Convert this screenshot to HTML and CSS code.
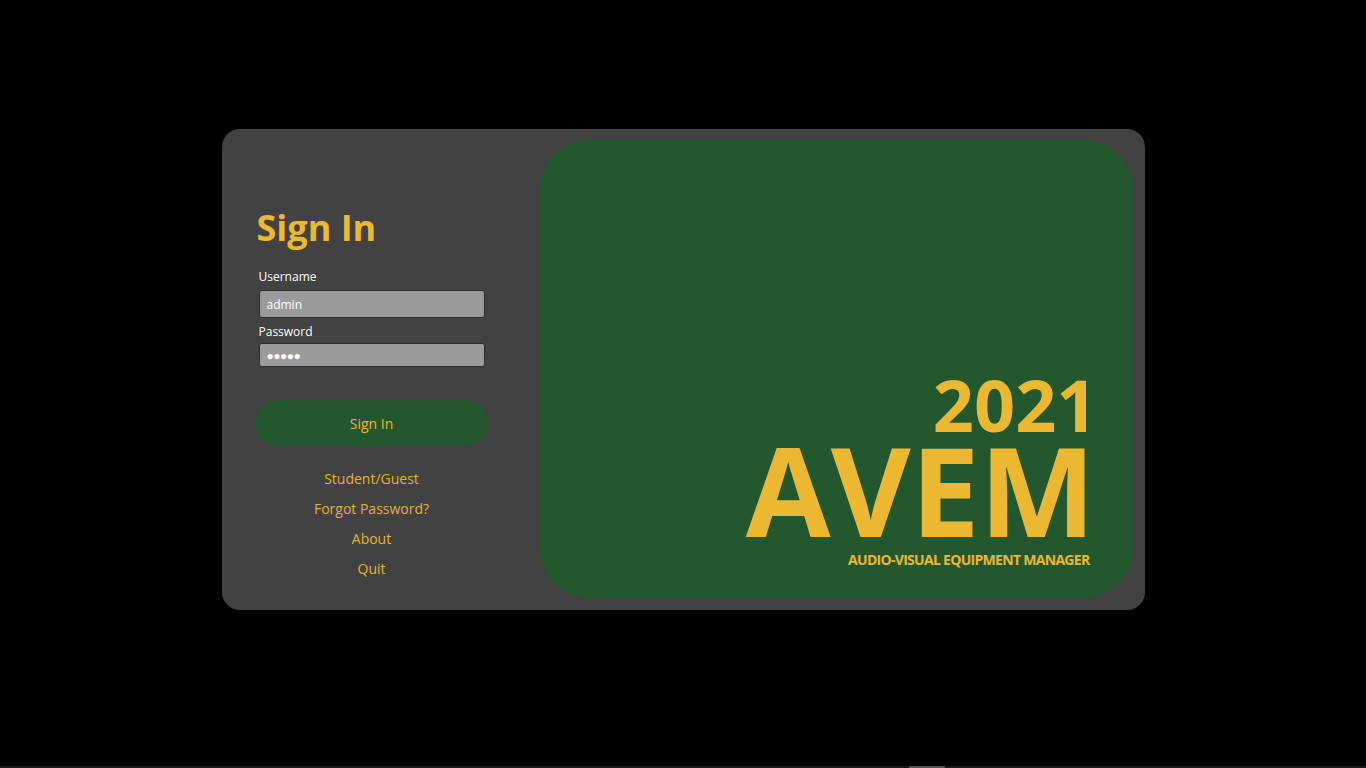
FILE: index.html
```html
<!DOCTYPE html>
<html lang="en">
<head>
<meta charset="utf-8">
<title>AVEM - Sign In</title>
<link rel="stylesheet" href="styles.css">
</head>
<body>
<div class="card">
  <div class="login">
    <h1 class="title">Sign In</h1>
    <label class="label label-user">Username</label>
    <div class="input input-user">admin</div>
    <label class="label label-pass">Password</label>
    <div class="input input-pass">●●●●●</div>
    <button class="btn">Sign In</button>
    <nav class="links">
      <a class="link">Student/Guest</a>
      <a class="link">Forgot Password?</a>
      <a class="link">About</a>
      <a class="link">Quit</a>
    </nav>
  </div>
  <div class="brand">
    <div class="year">2021</div>
    <div class="name">AVEM</div>
    <div class="sub">AUDIO-VISUAL EQUIPMENT MANAGER</div>
  </div>
</div>
<div class="bottombar"><span class="thumb"></span></div>
</body>
</html>
```
FILE: styles.css
```css
* { box-sizing: border-box; }
html, body { margin: 0; padding: 0; }
body {
  background: #000;
  height: 768px;
  overflow: hidden;
  font-family: "Open Sans", "Noto Sans", sans-serif;
}
.card {
  width: 923px;
  height: 481px;
  margin: 129px auto 0;
  background: #424242;
  border-radius: 18px;
  display: flex;
}
.login {
  width: 318px;
  padding: 79px 52px 0 34px;
  display: flex;
  flex-direction: column;
}
.title {
  margin: 0 0 0 1px;
  font-size: 36px;
  line-height: 40px;
  font-weight: 700;
  color: #ecb731;
}
.label {
  display: block;
  margin-left: 3px;
  font-size: 12px;
  line-height: 16px;
  color: #ffffff;
}
.label-user { margin-top: 21px; }
.label-pass { margin-top: 6px; }
.input {
  margin: 0 3px;
  background: #9b9b9b;
  border: 1px solid #2e2e2e;
  border-radius: 3px;
  color: #ffffff;
  font-size: 12px;
  padding-left: 7px;
  display: flex;
  align-items: center;
}
.input-user { margin-top: 5px; height: 28px; }
.input-pass { margin-top: 3px; height: 24px; font-size: 12px; letter-spacing: -0.5px; }
.btn {
  margin-top: 33px;
  height: 46px;
  width: 232px;
  border: none;
  border-radius: 23px;
  background: #23572e;
  color: #ecb731;
  font-family: inherit;
  font-size: 14px;
  padding: 0;
}
.links {
  margin-top: 18px;
  display: flex;
  flex-direction: column;
  align-items: center;
}
.link {
  font-size: 14px;
  line-height: 30px;
  color: #e5b32e;
}
.brand {
  flex: 1;
  margin: 11px 12px 12px 0;
  background: #23572e;
  border-radius: 50px;
  display: flex;
  flex-direction: column;
  justify-content: flex-end;
  align-items: flex-end;
  padding: 0 37px 29px 0;
  color: #ecb731;
  font-weight: 700;
}
.year {
  font-size: 72px;
  line-height: 72px;
  margin-right: -2px;
}
.name {
  font-size: 123px;
  line-height: 100px;
}
.sub {
  margin-top: 11px;
  margin-right: 6px;
  font-size: 14px;
  line-height: 18px;
  letter-spacing: -0.7px;
}
.bottombar {
  position: fixed;
  left: 0;
  right: 0;
  bottom: 0;
  height: 2px;
  background: #1c1c1c;
}
.thumb {
  position: absolute;
  left: 909px;
  width: 36px;
  top: 0;
  height: 2px;
  background: #555;
}
```
